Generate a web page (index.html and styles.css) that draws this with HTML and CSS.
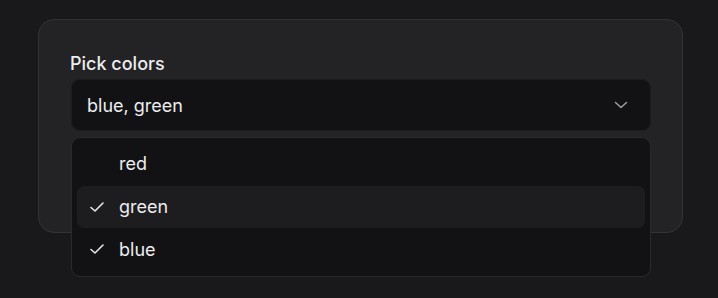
FILE: index.html
```html
<!DOCTYPE html>
<html>
<head>
<meta charset="utf-8">
<link rel="stylesheet" href="styles.css">
</head>
<body>
<div class="card">
  <div class="field">
    <label class="label">Pick colors</label>
    <div class="trigger">
      <span class="value">blue, green</span>
      <svg class="chevron" width="14" height="14" viewBox="0 0 14 14" fill="none"><path d="M1.5 4.5 L7 9.5 L12.5 4.5" stroke="#9d9da3" stroke-width="1.5" stroke-linecap="round" stroke-linejoin="round"/></svg>
    </div>
    <div class="menu">
      <div class="item"><span class="check"></span><span>red</span></div>
      <div class="item active"><span class="check"><svg width="16" height="16" viewBox="0 0 16 16" fill="none"><path d="M2 8.5 L6 12 L14 4" stroke="#e8e8ea" stroke-width="1.6" stroke-linecap="round" stroke-linejoin="round"/></svg></span><span>green</span></div>
      <div class="item"><span class="check"><svg width="16" height="16" viewBox="0 0 16 16" fill="none"><path d="M2 8.5 L6 12 L14 4" stroke="#e8e8ea" stroke-width="1.6" stroke-linecap="round" stroke-linejoin="round"/></svg></span><span>blue</span></div>
    </div>
  </div>
</div>
</body>
</html>
```
FILE: styles.css
```css
html, body {
  margin: 0;
  padding: 0;
  background: #19191b;
  font-family: Inter, "Noto Sans", sans-serif;
  color: #ececee;
}
body {
  box-sizing: border-box;
  min-height: 298px;
  padding: 19px 0 0 38px;
}
.card {
  box-sizing: border-box;
  width: 645px;
  height: 214px;
  background: #232325;
  border: 1px solid #333336;
  border-radius: 16px;
  padding: 31px 31px 0 31px;
}
.field {
  position: relative;
  display: flex;
  flex-direction: column;
  gap: 2px;
}
.label {
  font-size: 18px;
  line-height: 26px;
  font-weight: 500;
}
.trigger {
  box-sizing: border-box;
  height: 52px;
  margin-left: 1px;
  width: 580px;
  background: #121215;
  border: 1px solid #1c1c1f;
  border-radius: 9px;
  display: flex;
  align-items: center;
  justify-content: space-between;
  padding: 0 22px 0 15px;
  font-size: 18px;
}
.chevron {
  display: block;
}
.menu {
  position: absolute;
  top: 86px;
  left: 1px;
  z-index: 2;
  box-sizing: border-box;
  width: 580px;
  height: 140px;
  background: #121215;
  border: 1px solid #2a2a2d;
  border-radius: 9px;
  padding: 5px;
  display: flex;
  flex-direction: column;
}
.item {
  height: 43px;
  display: flex;
  align-items: center;
  padding-left: 12px;
  padding-bottom: 1px;
  box-sizing: border-box;
  border-radius: 7px;
  font-size: 18px;
  gap: 14px;
}
.item.active {
  background: #1d1d20;
}
.check {
  width: 16px;
  height: 16px;
  display: flex;
}
```
